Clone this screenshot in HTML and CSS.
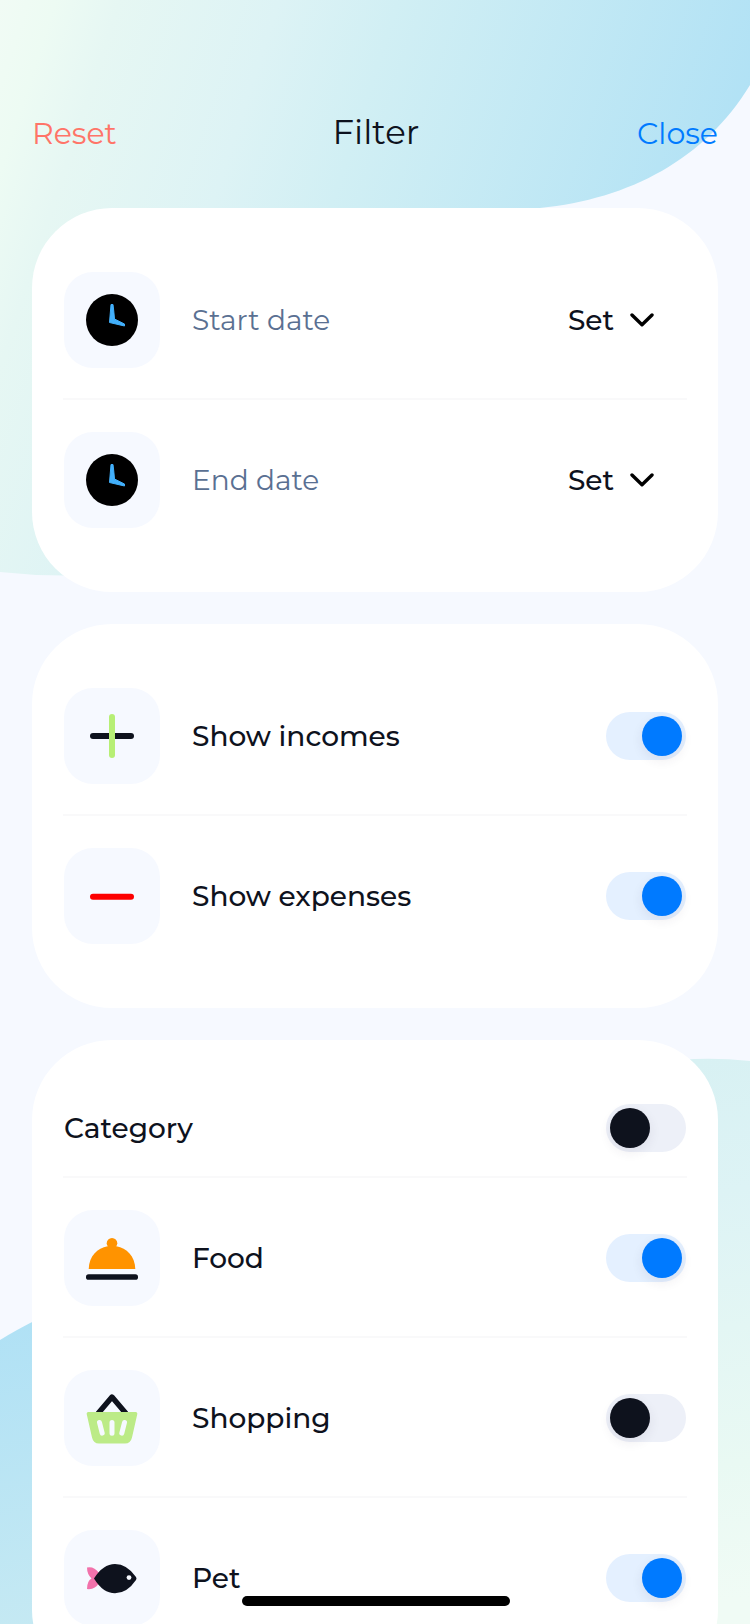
FILE: index.html
```html
<!DOCTYPE html>
<html lang="en">
<head>
<meta charset="utf-8">
<title>Filter</title>
<link rel="stylesheet" href="styles.css">
</head>
<body>
<div class="screen">
  <svg class="backdrop" viewBox="0 0 750 1624" aria-hidden="true">
    <defs>
      <linearGradient id="top" gradientUnits="userSpaceOnUse" x1="0" y1="0" x2="720" y2="235">
        <stop offset="0" stop-color="#f1fbf5"/>
        <stop offset=".07" stop-color="#edfbf3"/>
        <stop offset=".15" stop-color="#e6f7f3"/>
        <stop offset=".35" stop-color="#ddf3f5"/>
        <stop offset=".5" stop-color="#d1eff4"/>
        <stop offset="1" stop-color="#b0e1f5"/>
      </linearGradient>
      <linearGradient id="right" gradientUnits="userSpaceOnUse" x1="700" y1="1059" x2="790" y2="1590">
        <stop offset="0" stop-color="#d8f1f3"/>
        <stop offset=".25" stop-color="#ddf3f5"/>
        <stop offset=".75" stop-color="#e9f9f3"/>
        <stop offset="1" stop-color="#f0fbf5"/>
      </linearGradient>
      <linearGradient id="left" gradientUnits="userSpaceOnUse" x1="0" y1="1322" x2="60" y2="1624">
        <stop offset="0" stop-color="#b0e1f5"/>
        <stop offset="1" stop-color="#c5e9f3"/>
      </linearGradient>
    </defs>
    <path fill="url(#top)" d="M0 0H750V85C705 159 630 199 540 208L90 575Q45 577 0 572Z"/>
    <path fill="url(#right)" d="M680 1060Q712 1057 750 1061V1624H680Z"/>
    <path fill="url(#left)" d="M0 1340Q16 1330 40 1318V1624H0Z"/>
  </svg>

  <header class="bar">
    <a class="bar-link reset">Reset</a>
    <h1 class="title">Filter</h1>
    <a class="bar-link close">Close</a>
  </header>

  <main class="cards">
    <section class="card">
      <div class="row">
        <span class="tile"><svg class="icon" viewBox="0 0 96 96"><circle cx="48" cy="48" r="26"/><path fill="#42b0fb" stroke="#42b0fb" stroke-linejoin="round" d="M47 32.500h2q1 8 1.500 14.500L60.500 52V54L45.500 50.500Z"/></svg></span>
        <span class="label muted">Start date</span>
        <span class="value">Set</span>
        <svg class="chevron" viewBox="0 0 24 14"><path d="M2 2L12 11.800L22 2"/></svg>
      </div>
      <div class="row">
        <span class="tile"><svg class="icon" viewBox="0 0 96 96"><circle cx="48" cy="48" r="26"/><path fill="#42b0fb" stroke="#42b0fb" stroke-linejoin="round" d="M47 32.500h2q1 8 1.500 14.500L60.500 52V54L45.500 50.500Z"/></svg></span>
        <span class="label muted">End date</span>
        <span class="value">Set</span>
        <svg class="chevron" viewBox="0 0 24 14"><path d="M2 2L12 11.800L22 2"/></svg>
      </div>
    </section>

    <section class="card">
      <div class="row">
        <span class="tile"><svg class="icon" viewBox="0 0 96 96"><rect x="26" y="45" width="44" height="6" rx="3" fill="#0e121d"/><rect x="45" y="26" width="6" height="44" rx="3" fill="#b7ef75"/></svg></span>
        <span class="label">Show incomes</span>
        <span class="switch on"><i class="knob"></i></span>
      </div>
      <div class="row">
        <span class="tile"><svg class="icon" viewBox="0 0 96 96"><rect x="26" y="45.800" width="44" height="6" rx="3" fill="#fd0000"/></svg></span>
        <span class="label">Show expenses</span>
        <span class="switch on"><i class="knob"></i></span>
      </div>
    </section>

    <section class="card">
      <div class="row heading">
        <span class="label">Category</span>
        <span class="switch"><i class="knob"></i></span>
      </div>
      <div class="row">
        <span class="tile"><svg class="icon" viewBox="0 0 96 96"><circle cx="48" cy="33.300" r="5.300" fill="#ff9300"/><path fill="#ff9300" d="M24.700 59C25 46 33.500 38 43.500 36.200H52.500C62.500 38 71 46 71.300 59Z"/><rect x="22" y="64.300" width="52" height="5.500" rx="2.600" fill="#0e121d"/></svg></span>
        <span class="label">Food</span>
        <span class="switch on"><i class="knob"></i></span>
      </div>
      <div class="row">
        <span class="tile"><svg class="icon" viewBox="0 0 96 96"><path d="M34 43.500L48 27L62 43.500" fill="none" stroke="#0e121d" stroke-width="5.400" stroke-linejoin="round"/><path fill="#bceb87" d="M24.500 42H71.500Q73.800 42 73.200 44.500L68 67.500Q66.600 73.500 61 73.500H35Q29.400 73.500 28 67.500L22.800 44.500Q22.200 42 24.500 42Z"/><path d="M35.500 52.500L38.200 63.200M48 52.500V63.200M60.500 52.500L57.800 63.200" stroke="#f6f9ff" stroke-width="5" stroke-linecap="round"/></svg></span>
        <span class="label">Shopping</span>
        <span class="switch"><i class="knob"></i></span>
      </div>
      <div class="row">
        <span class="tile"><svg class="icon" viewBox="0 0 96 96"><path fill="#f272ab" d="M23 37.500Q30 36 35 43V53Q31 60 23 59Q23 51 27.500 48.500Q23 44 23 37.500Z"/><path fill="#0e121d" d="M30 48.500Q39 34 51 34Q63 34 72 47Q73 48.500 72 50Q63 63.300 51 63.300Q39 63.300 30 48.500Z"/><circle cx="65" cy="47.600" r="2.400" fill="#f6f9ff"/></svg></span>
        <span class="label">Pet</span>
        <span class="switch on"><i class="knob"></i></span>
      </div>
    </section>
  </main>
  <div class="home-indicator"></div>
</div>
</body>
</html>
```

FILE: styles.css
```css
* { box-sizing: border-box; }
html, body { margin: 0; }
body {
  font-family: Montserrat, Inter, "Open Sans", sans-serif;
  color: #0e121d;
  background: #f6f9ff;
}
.screen {
  position: relative;
  width: 750px;
  height: 1624px;
  overflow: hidden;
}
.backdrop {
  position: absolute;
  inset: 0;
  width: 750px;
  height: 1624px;
}
.bar {
  position: relative;
  display: grid;
  grid-template-columns: 1fr auto 1fr;
  align-items: baseline;
  height: 208px;
  padding: 108px 32px 0;
}
.bar-link { font-size: 30px; font-weight: 400; line-height: 48px; }
.reset { color: #ff7468; }
.close { justify-self: end; color: #007aff; }
.title { margin: 0; padding-left: 2px; font-size: 34px; font-weight: 400; line-height: 48px; }
.cards {
  position: relative;
  display: flex;
  flex-direction: column;
  gap: 32px;
  padding: 0 32px;
}
.card {
  flex: none;
  padding: 64px 31px;
  border-radius: 80px;
  background: #fff;
}
.row {
  display: flex;
  align-items: center;
  height: 96px;
  padding: 0 1px;
}
.row + .row { height: 130px; padding-top: 32px; border-top: 2px solid #f9f9fa; margin-top: 30px; }
.card .heading { height: 48px; }
.heading + .row { margin-top: 24px; }
.tile {
  flex: none;
  width: 96px;
  height: 96px;
  margin-right: 32px;
  border-radius: 29px;
  background: #f6f9ff;
}
.icon { display: block; width: 96px; height: 96px; }
.label { flex: 1; font-size: 28px; font-weight: 500; line-height: 36px; white-space: nowrap; }
.muted { color: #5a7092; font-weight: 400; }
.value { font-size: 28px; font-weight: 500; line-height: 36px; margin-right: 16px; }
.chevron {
  width: 24px;
  height: 14px;
  margin-right: 32px;
  fill: none;
  stroke: #000;
  stroke-width: 3.400;
  stroke-linecap: round;
  stroke-linejoin: round;
}
.switch {
  display: flex;
  flex: none;
  width: 80px;
  height: 48px;
  padding: 4px;
  border-radius: 24px;
  background: #edf0f8;
}
.knob {
  width: 40px;
  height: 40px;
  border-radius: 50%;
  background: #0e121d;
  box-shadow: 0 4px 12px rgba(50, 40, 80, .09);
}
.on { justify-content: flex-end; background: #e4f0ff; }
.on .knob { background: #007aff; }
.home-indicator {
  position: absolute;
  left: 242px;
  top: 1596px;
  width: 268px;
  height: 10px;
  border-radius: 5px;
  background: #000;
}
```
